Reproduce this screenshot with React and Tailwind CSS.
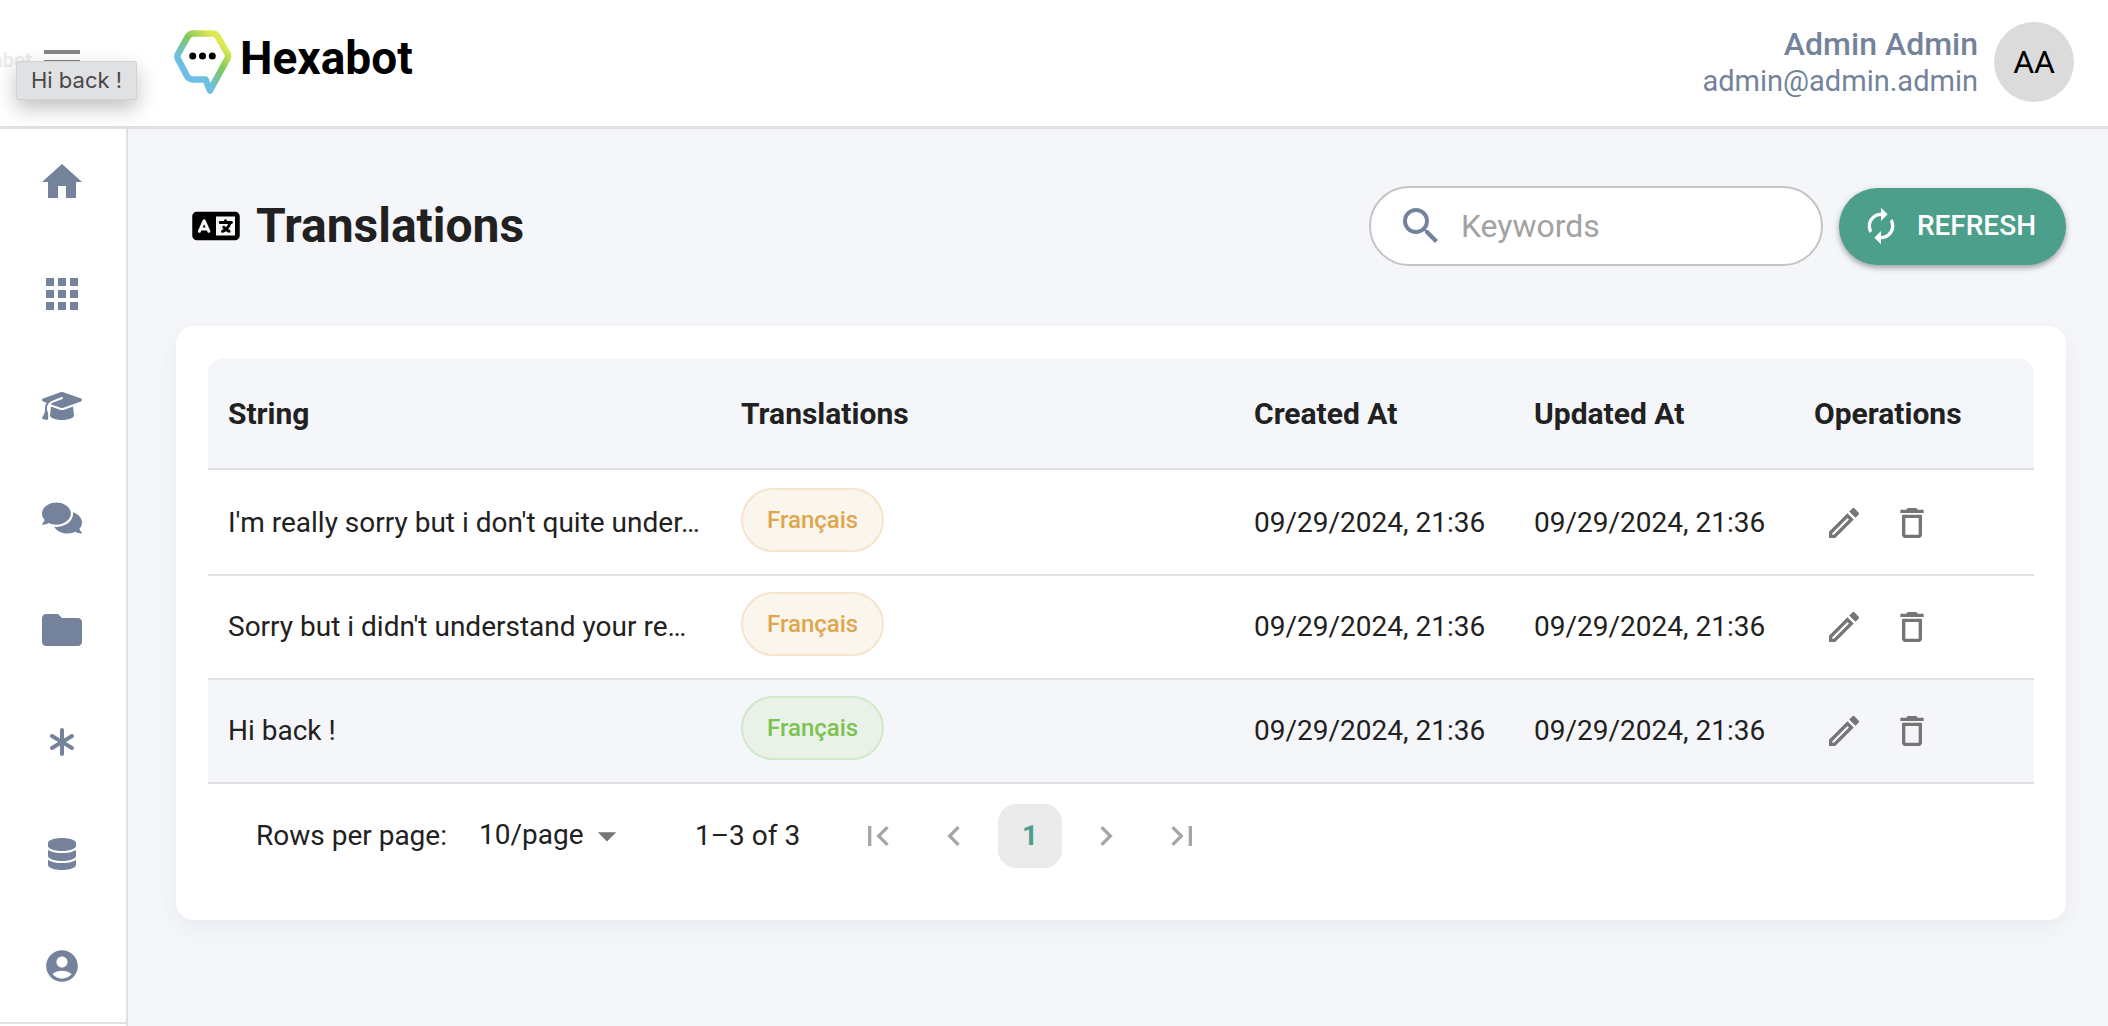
import {
  MdHome,
  MdApps,
  MdFolder,
  MdAccountCircle,
  MdMenu,
  MdSearch,
  MdAutorenew,
  MdOutlineEdit,
  MdDeleteOutline,
  MdArrowDropDown,
  MdFirstPage,
  MdChevronLeft,
  MdChevronRight,
  MdLastPage,
} from "react-icons/md";
import { FaComments } from "react-icons/fa";
import { FaGraduationCap, FaAsterisk, FaDatabase, FaLanguage } from "react-icons/fa6";

const navItems = [
  { label: "Dashboard", icon: <MdHome className="size-12" /> },
  { label: "Apps", icon: <MdApps className="size-12" /> },
  { label: "NLU", icon: <FaGraduationCap className="h-8 w-10" /> },
  { label: "Inbox", icon: <FaComments className="h-9 w-10" /> },
  { label: "Content", icon: <MdFolder className="size-12" /> },
  { label: "Context", icon: <FaAsterisk className="h-8 w-7" /> },
  { label: "Data", icon: <FaDatabase className="h-8 w-7" /> },
  { label: "Users", icon: <MdAccountCircle className="size-[38px]" /> },
];

const rows = [
  { id: 1, text: "I'm really sorry but i don't quite under…", done: false },
  { id: 2, text: "Sorry but i didn't understand your re…", done: false },
  { id: 3, text: "Hi back !", done: true },
];

function Logo() {
  return (
    <a href="#" className="flex items-center gap-2 text-black">
      <svg className="h-16 w-[58px]" viewBox="0 0 58 64" fill="none" aria-hidden="true">
        <defs>
          <linearGradient id="logo" x1="8" y1="46" x2="46" y2="4" gradientUnits="userSpaceOnUse">
            <stop offset="0" stopColor="#6cc0e5" />
            <stop offset="0.2" stopColor="#6cc0e5" />
            <stop offset="0.58" stopColor="#82c95a" />
            <stop offset="0.9" stopColor="#dfe951" />
            <stop offset="1" stopColor="#dfe951" />
          </linearGradient>
        </defs>
        <path
          d="M4 24 L13.5 7 Q15.5 3.5 19.5 3.5 H38 Q42 3.5 44 7 L53.5 23.5 Q54.8 26 53.5 28.5 L36 60.5 L31.5 49.5 H19 Q15 49.5 13 46 L4 29 Q2.8 26.5 4 24 Z"
          stroke="url(#logo)"
          strokeWidth="6.5"
          strokeLinejoin="round"
        />
        <circle cx="18.7" cy="26" r="3.5" fill="#000" />
        <circle cx="28.5" cy="26" r="3.5" fill="#000" />
        <circle cx="38.3" cy="26" r="3.5" fill="#000" />
      </svg>
      <span className="pb-2 text-[46px] font-bold leading-[56px]">Hexabot</span>
    </a>
  );
}

function Header() {
  return (
    <header className="relative flex items-center border-b-3 border-[#e0e0e0] bg-white pt-[22px] pb-6 pl-[38px] pr-[34px]">
      <div className="absolute left-0 top-[46px] text-[#ececec]" aria-hidden="true">
        <span className="-ml-2 text-xl font-bold">abot</span>
      </div>
      <button type="button" aria-label="Toggle menu" className="text-[#858585]">
        <MdMenu className="size-12" />
      </button>
      <div
        className="absolute left-4 top-[61px] z-10 rounded-[3px] border border-[#d0d1d2] bg-[#e0e1e3] px-3.5 font-[Inter,sans-serif] text-[22px] leading-[37px] text-[#484848] shadow-[0_8px_20px_rgba(0,0,0,0.25)]"
        role="tooltip"
      >
        Hi back !
      </div>
      <div className="ml-[88px]">
        <Logo />
      </div>
      <div className="ml-auto text-right text-[#74839b]">
        <p className="text-[32px] font-medium leading-[38px]">Admin Admin</p>
        <p className="text-[29px] leading-9">admin@admin.admin</p>
      </div>
      <div className="ml-4 flex size-20 items-center justify-center rounded-full bg-[#dbdbdb] text-[32px] text-black">
        AA
      </div>
    </header>
  );
}

function Sidebar() {
  return (
    <aside className="w-32 shrink-0 border-r-2 border-[#e0e0e0] bg-white">
      <nav>
        <ul className="flex flex-col gap-16 border-b-2 border-[#e0e0e0] pt-[29px] pb-8 pr-0.5">
          {navItems.map((item) => (
            <li key={item.label} className="flex justify-center">
              <a href="#" aria-label={item.label} className="flex size-12 items-center justify-center text-[#74839b]">
                {item.icon}
              </a>
            </li>
          ))}
        </ul>
      </nav>
    </aside>
  );
}

function Chip({ done }) {
  return (
    <span
      className={
        "inline-flex h-16 items-center rounded-full border-2 px-6 text-2xl font-medium " +
        (done
          ? "border-[#d2e8c8] bg-[#e9f1e8] text-[#7cc251]"
          : "border-[#f6e5cb] bg-[#faf5ed] text-[#dfa64e]")
      }
    >
      Français
    </span>
  );
}

function TranslationsTable() {
  return (
    <table className="w-full table-fixed border-separate border-spacing-0 text-left text-[28px] leading-10">
      <colgroup>
        <col />
        <col />
        <col className="w-[280px]" />
        <col className="w-[280px]" />
        <col className="w-[240px]" />
      </colgroup>
      <thead>
        <tr className="h-28 text-[30px]">
          {["String", "Translations", "Created At", "Updated At", "Operations"].map((name) => (
            <th
              key={name}
              scope="col"
              className="border-b-2 border-[#e0e0e0] bg-[#f5f6fa] px-5 pt-0.5 font-bold first:rounded-tl-2xl last:rounded-tr-2xl"
            >
              {name}
            </th>
          ))}
        </tr>
      </thead>
      <tbody>
        {rows.map((row) => (
          <tr
            key={row.id}
            className="h-[104px] first:h-[106px] last:bg-[#f5f6fa] [&>td]:border-b-2 [&>td]:border-[#e0e0e0] [&>td]:px-5 first:[&>td]:pt-0.5"
          >
            <td className="whitespace-nowrap">{row.text}</td>
            <td>
              <div className="flex pb-1.5">
                <Chip done={row.done} />
              </div>
            </td>
            <td className="whitespace-nowrap">09/29/2024, 21:36</td>
            <td className="whitespace-nowrap">09/29/2024, 21:36</td>
            <td>
              <div className="flex gap-7 pl-2.5 text-[#757575]">
                <button type="button" aria-label="Edit">
                  <MdOutlineEdit className="size-10" />
                </button>
                <button type="button" aria-label="Delete">
                  <MdDeleteOutline className="size-10" />
                </button>
              </div>
            </td>
          </tr>
        ))}
      </tbody>
    </table>
  );
}

function PageButton({ label, children }) {
  return (
    <button type="button" aria-label={label} className="flex size-16 items-center justify-center text-[#a6a6a6]">
      {children}
    </button>
  );
}

function Pagination() {
  return (
    <div className="flex h-[104px] items-center pl-12 text-[28px]">
      <label htmlFor="page-size">Rows per page:</label>
      <div className="relative ml-8">
        <select id="page-size" className="w-[152px] appearance-none bg-transparent pb-0.5 outline-none">
          <option>10/page</option>
        </select>
        <MdArrowDropDown className="pointer-events-none absolute right-0 top-0 h-full w-12 text-[#757575]" />
      </div>
      <span className="ml-16">1–3 of 3</span>
      <div className="ml-[46px] flex gap-3">
        <PageButton label="First page">
          <MdFirstPage className="size-10" />
        </PageButton>
        <PageButton label="Previous page">
          <MdChevronLeft className="size-10" />
        </PageButton>
        <button type="button" aria-current="page" className="size-16 rounded-[18px] bg-[#ebebeb] font-bold text-[#4c9f8b]">
          1
        </button>
        <PageButton label="Next page">
          <MdChevronRight className="size-10" />
        </PageButton>
        <PageButton label="Last page">
          <MdLastPage className="size-10" />
        </PageButton>
      </div>
    </div>
  );
}

export default function App() {
  return (
    <div className="flex min-h-screen flex-col bg-[#f5f6fa] font-[Roboto,sans-serif] text-[#212121]">
      <Header />
      <div className="flex flex-1">
        <Sidebar />
        <main className="min-w-0 flex-1 pb-12 pl-12 pr-[42px] pt-[57px]">
          <div className="flex items-center pl-4">
            <FaLanguage className="h-[38px] w-12 text-black" />
            <h1 className="ml-4 text-5xl font-bold">Translations</h1>
            <label className="ml-auto flex h-20 w-[454px] items-center rounded-full border-2 border-[#c4c4c4] bg-white pl-[26px] pr-7">
              <MdSearch className="size-12 shrink-0 text-[#74839b]" />
              <input
                type="text"
                aria-label="Keywords"
                placeholder="Keywords"
                className="ml-4 min-w-0 flex-1 bg-transparent text-[32px] outline-none placeholder:text-[#a2a2a2]"
              />
            </label>
            <button
              type="button"
              className="ml-4 flex h-[77px] items-center gap-4 rounded-full bg-[#4c9f8b] pl-[22px] pr-[30px] text-[28px] font-medium text-white shadow-[0_3px_5px_rgba(0,0,0,0.25),0_2px_8px_rgba(0,0,0,0.12)]"
            >
              <MdAutorenew className="size-10" />
              REFRESH
            </button>
          </div>
          <section className="mt-[60px] rounded-[18px] bg-white p-8 shadow-[0_8px_20px_rgba(60,60,100,0.06)]">
            <TranslationsTable />
            <Pagination />
          </section>
        </main>
      </div>
    </div>
  );
}
